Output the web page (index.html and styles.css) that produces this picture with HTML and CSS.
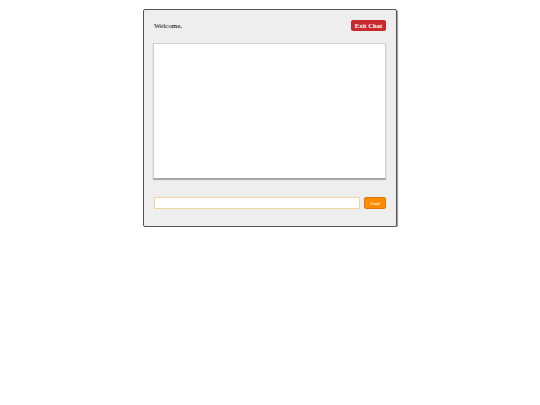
FILE: index.html
```html
<!DOCTYPE html>
<html>
<head>
<meta charset="utf-8">
<title>Chat</title>
<link rel="stylesheet" href="styles.css">
</head>
<body>
<div class="wrapper">
  <div class="menu">
    <p class="welcome">Welcome, <b></b></p>
    <a class="logout" href="#">Exit Chat</a>
  </div>
  <div class="chatbox"></div>
  <form class="msgform">
    <input class="usermsg" type="text">
    <button class="submitmsg" type="button">Send</button>
  </form>
</div>
</body>
</html>
```
FILE: styles.css
```css
html, body {
  margin: 0;
  padding: 0;
  background: #fff;
  font-family: "Liberation Serif", "Times New Roman", serif;
}
.wrapper {
  box-sizing: border-box;
  width: 254px;
  margin: 9px auto 0;
  padding: 10px 10px 17px 9px;
  background: #eeeeee;
  border: 1px solid #555;
  border-radius: 2px;
  box-shadow: 1px 1px 1px #999;
}
.menu {
  display: flex;
  justify-content: space-between;
  align-items: center;
  height: 11px;
  padding-left: 1px;
}
.welcome {
  margin: 0;
  font-size: 7px;
  color: #000;
}
.logout {
  display: flex;
  align-items: center;
  justify-content: center;
  box-sizing: border-box;
  width: 35px;
  height: 11px;
  background: #c9282d;
  color: #fff;
  font-weight: bold;
  font-size: 6.6px;
  text-decoration: none;
  border-radius: 2px;
}
.chatbox {
  box-sizing: border-box;
  margin-top: 12px;
  height: 136px;
  background: #fff;
  border: 1px solid #cfcfcf;
  border-bottom-color: #a0a0a0;
  box-shadow: 0 1px 1px #b0b0b0;
}
.msgform {
  display: flex;
  align-items: center;
  justify-content: space-between;
  margin: 18px 0 0 1px;
}
.usermsg {
  box-sizing: border-box;
  width: 206px;
  height: 12px;
  margin: 0;
  padding: 0;
  border: 1px solid #f2d49e;
  border-radius: 1px;
  background: #fff;
  outline: none;
}
.submitmsg {
  box-sizing: border-box;
  width: 22px;
  height: 12px;
  margin: 0;
  padding: 0;
  background: #ff8c00;
  border: 1px solid #e0760a;
  border-radius: 2px;
  color: #ffe8c8;
  font-family: "Liberation Serif", serif;
  font-weight: bold;
  font-size: 4.5px;
}
```
